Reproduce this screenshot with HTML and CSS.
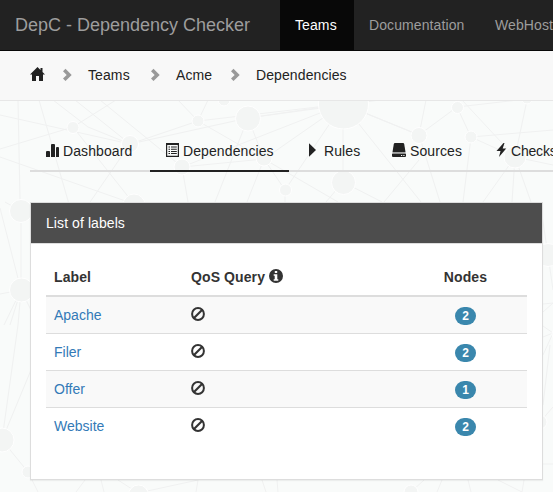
FILE: index.html
```html
<!DOCTYPE html>
<html lang="en">
<head>
<meta charset="utf-8">
<title>DepC - Dependency Checker</title>
<link rel="stylesheet" href="styles.css">
</head>
<body>
<svg class="network" viewBox="0 0 553 492" aria-hidden="true">
  <path d="M18 100L20 200M0 149L73 127L116 100M39 100L73 218M53 100L88 127L130 144L248 118L343 104L419 135L457 107L527 99M75 100L130 144L88 205L51 204M100 100L182 167L264 159L338 202M0 157L134 204M73 127L134 204M130 144L198 121L343 104M178 100L198 121L208 100M198 121L264 159L343 104M248 118L215 202M248 118L264 159L247 202M182 167L188 202M182 167L343 104M343 104L285 190L285 202M343 104V182L326 202M343 182L382 202M343 104L421 202M343 104L419 135L440 202M426 100L419 135M457 107L471 137L463 202M471 137L553 130M462 100L515 157L553 165M527 100L515 157L483 202M515 157L512 202M515 157L531 202M419 160L384 202M471 137L515 157M0 208L21 290V211M21 290L0 294M21 290L4 325M21 290L10 325M21 290L18 325M21 290L31 310M18 325L2 440L31 370M2 440L28 472L38 492M85 480L76 492M101 480L104 492M118 480L138 493L198 480L196 492M262 480L266 492M277 480L278 492M424 480L411 492M442 480L437 492M468 480L471 492M498 480L522 492L524 480M543 312L553 303M543 326L553 333L543 355M543 337L553 333M543 405L550 345M540 422L553 407M543 464H553M548 255L553 290M543 304L553 303M548 255L540 202M21 211L5 202M0 115L130 144M248 118L380 100M285 190L264 159"/>
  <g>
    <circle cx="73" cy="127.5" r="6"/><circle cx="130" cy="144" r="8.5"/><circle cx="198" cy="121" r="6"/><circle cx="248" cy="118.500" r="12.500"/><circle cx="224" cy="100" r="6"/><circle cx="182" cy="167" r="8"/><circle cx="264" cy="158" r="8"/><circle cx="134" cy="205" r="11"/><circle cx="21" cy="211" r="11.500"/><circle cx="343.500" cy="104" r="25"/><circle cx="419" cy="135.500" r="8"/><circle cx="457.500" cy="107.500" r="6"/><circle cx="471" cy="137" r="6"/><circle cx="515" cy="157" r="11"/><circle cx="343.500" cy="182.500" r="12"/><circle cx="285.500" cy="190" r="6"/><circle cx="527" cy="98" r="6"/><circle cx="21.500" cy="290" r="12"/><circle cx="2" cy="440" r="12"/><circle cx="28" cy="472" r="6"/><circle cx="138.500" cy="495" r="10"/><circle cx="548" cy="255" r="11.500"/><circle cx="540" cy="422" r="7"/><circle cx="411" cy="492" r="7"/><circle cx="558" cy="334" r="6"/>
  </g>
</svg>
<svg class="sprite" aria-hidden="true">
  <symbol id="chevron" viewBox="0 0 14 14"><path d="M5.500 .7L11.700 6.900L5.500 13.100L3 10.600L6.700 6.900L3 3.200Z"/></symbol>
  <symbol id="ban" viewBox="0 0 14 14"><circle cx="7" cy="7" r="5.900" fill="none" stroke="currentColor" stroke-width="2"/><path d="M3 11L11 3" stroke="currentColor" stroke-width="2.200"/></symbol>
</svg>
<nav class="navbar">
  <a class="brand">DepC - Dependency Checker</a>
  <a class="nav-item active">Teams</a>
  <a class="nav-item docs">Documentation</a>
  <a class="nav-item">WebHosting</a>
</nav>
<div class="breadcrumb">
  <svg class="home" viewBox="0 0 15 14"><path d="M7.500 0L15 7.500H13V14H9V9H6V14H2V7.500H0ZM10.500 1H12.500V5H10.500Z"/></svg>
  <svg class="chev"><use href="#chevron"/></svg>
  <span class="crumb teams">Teams</span>
  <svg class="chev"><use href="#chevron"/></svg>
  <span class="crumb acme">Acme</span>
  <svg class="chev"><use href="#chevron"/></svg>
  <span class="crumb deps">Dependencies</span>
</div>
<div class="tabs">
  <a class="tab dashboard"><svg viewBox="0 0 14 14"><path d="M0 8Q0 7 1 7H3Q4 7 4 8V13H0ZM5 1Q5 0 6 0H8Q9 0 9 1V13H5ZM10 4Q10 3 11 3H12Q13 3 13 4V13H10Z"/></svg><span>Dashboard</span></a>
  <a class="tab dependencies current"><svg viewBox="0 0 14 14"><path fill-rule="evenodd" d="M0 0H13V14H0ZM1.200 2V12.800H11.800V2ZM2.500 3.500H4V4.500H2.500ZM5 3.500H10.800V4.500H5ZM2.500 5.700H4V6.700H2.500ZM5 5.700H10.800V6.700H5ZM2.500 7.900H4V8.900H2.500ZM5 7.900H10.800V8.900H5ZM2.500 10.100H4V11.100H2.500ZM5 10.100H10.800V11.100H5Z"/></svg><span>Dependencies</span></a>
  <a class="tab rules"><svg viewBox="0 0 14 14"><path d="M5 .3L12 7L5 13.700Z"/></svg><span>Rules</span></a>
  <a class="tab sources"><svg viewBox="0 0 14 14"><path d="M3 0H11Q12 0 12.200 1L13.500 9H.5L1.800 1Q2 0 3 0Z"/><path d="M.5 9H13.500V10.800H.5Z" opacity=".4"/><path fill-rule="evenodd" d="M0 10.800H14V13Q14 14 13 14H1Q0 14 0 13ZM9 12V13H10.200V12ZM11.300 12V13H12.500V12Z"/></svg><span>Sources</span></a>
  <a class="tab checks"><svg viewBox="0 0 14 14"><path d="M8.500 0L1.500 8H5.500L4 14L11.200 5.500H7.700L9.500 0Z"/></svg><span>Checks</span></a>
</div>
<section class="panel">
  <h1 class="panel-heading">List of labels</h1>
  <div class="panel-body">
    <table>
      <thead><tr><th class="label-col">Label</th><th class="query-col">QoS Query<svg class="info" viewBox="0 0 14 14"><path fill-rule="evenodd" d="M7 0A7 7 0 1 1 7 14A7 7 0 1 1 7 0ZM5.800 2V4H8.200V2ZM4.700 5.300V6.700H5.700V10.200H4.700V11.700H9.300V10.200H8.300V5.300Z"/></svg></th><th class="nodes-col">Nodes</th></tr></thead>
      <tbody>
        <tr><td><a>Apache</a></td><td><svg class="ban"><use href="#ban"/></svg></td><td class="nodes-col"><span class="badge">2</span></td></tr>
        <tr><td><a>Filer</a></td><td><svg class="ban"><use href="#ban"/></svg></td><td class="nodes-col"><span class="badge">2</span></td></tr>
        <tr><td><a>Offer</a></td><td><svg class="ban"><use href="#ban"/></svg></td><td class="nodes-col"><span class="badge">1</span></td></tr>
        <tr><td><a>Website</a></td><td><svg class="ban"><use href="#ban"/></svg></td><td class="nodes-col"><span class="badge">2</span></td></tr>
      </tbody>
    </table>
  </div>
</section>
</body>
</html>
```
FILE: styles.css
```css
* { box-sizing: border-box; }
body {
  margin: 0;
  height: 492px;
  overflow: hidden;
  background: #f9fbfa;
  color: #333;
  font: 14px/20px "Liberation Sans", Arial, sans-serif;
}
svg { display: block; flex: none; fill: currentColor; }
.sprite { position: absolute; width: 0; height: 0; }
.network { position: absolute; inset: 0; width: 553px; height: 492px; z-index: -1; }
.network path { fill: none; stroke: #f0f1f1; stroke-width: 1; }
.network circle { fill: #f3f5f4; stroke: #fff; stroke-width: 1; }

.navbar {
  display: flex;
  height: 51px;
  overflow: hidden;
  background: #222;
  border-bottom: 1px solid #080808;
  color: #9d9d9d;
  white-space: nowrap;
}
.brand { flex: none; width: 280px; padding: 15px; font-size: 18px; }
.nav-item { flex: none; padding: 15px; letter-spacing: .1px; }
.nav-item.active { width: 74px; background: #080808; color: #fff; }
.nav-item.docs { width: 126px; }

.breadcrumb {
  display: flex;
  align-items: center;
  height: 50px;
  padding: 0 0 1px 30px;
  background: #f8f8f8;
  border-bottom: 1px solid #e7e7e7;
  color: #222;
}
.home { width: 15px; height: 14px; margin-bottom: 2px; }
.chev { width: 14px; height: 14px; margin: 0 14px 0 15px; color: #999; }
.crumb { flex: none; letter-spacing: .1px; }
.teams { width: 45px; }
.acme { width: 37px; }

.tabs {
  display: flex;
  height: 40px;
  margin: 31px 0 0 30px;
  overflow: hidden;
  color: #222;
}
.tab {
  display: flex;
  flex: none;
  gap: 4px;
  padding: 9px 0 0 16px;
  border-bottom: 2px solid #ddd;
  letter-spacing: .1px;
  white-space: nowrap;
}
.tab svg { width: 14px; height: 14px; margin-top: 2px; }
.tab.current { border-color: #222; }
.dashboard { width: 120px; gap: 3px; }
.dashboard svg { margin-top: 3px; }
.dependencies { width: 139px; gap: 3px; }
.rules { width: 87px; padding-left: 15px; gap: 6px; }
.sources { width: 102px; }
.checks { width: 120px; padding-left: 17px; gap: 2px; letter-spacing: -.2px; }

.panel {
  width: 513px;
  height: 278px;
  margin: 30px 0 0 30px;
  background: #fff;
  border: 1px solid #ddd;
  box-shadow: 0 1px 1px rgba(0, 0, 0, .05);
}
.panel-heading {
  height: 41px;
  margin: 0;
  padding: 10px 15px;
  border-bottom: 1px solid #ddd;
  background: #4d4d4d;
  color: #fff;
  font-size: 14px;
  font-weight: 400;
  letter-spacing: .08px;
}
.panel-body { padding: 15px; }
table { width: 481px; table-layout: fixed; border-collapse: separate; border-spacing: 0; }
th, td { height: 37px; padding: 8px; border-top: 1px solid #ddd; text-align: left; vertical-align: top; }
th { height: 38px; border-top: 0; border-bottom: 2px solid #ddd; letter-spacing: .1px; }
tbody tr:first-child td { border-top: 0; height: 36px; }
tbody tr:nth-child(odd) { background: #f9f9f9; }
.label-col { width: 137px; }
.query-col { width: 221px; }
th.nodes-col, td.nodes-col { text-align: center; }
.info { display: inline-block; width: 14px; height: 14px; margin-left: 4px; vertical-align: -1px; }
.ban { width: 14px; height: 14px; margin-top: 2px; }
td a { color: #337ab7; }
.badge {
  display: block;
  width: 21px;
  height: 18px;
  margin: 2px auto 0;
  border-radius: 9px;
  background: #3a87ad;
  color: #fff;
  font-size: 12px;
  font-weight: 700;
  line-height: 18px;
}
```
